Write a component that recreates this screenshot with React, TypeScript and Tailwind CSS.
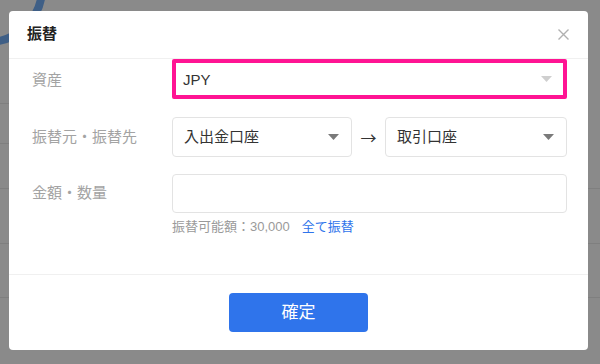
import React from "react";

const font = { fontFamily: '"Liberation Sans", "Noto Sans CJK JP", sans-serif' };

function Caret({ light }: { light?: boolean }) {
  return (
    <svg width="11" height="6" viewBox="0 0 11 6" className="shrink-0">
      <path d="M0 0 L11 0 L5.5 6 Z" fill={light ? "#cfcfcf" : "#7a7a7a"} />
    </svg>
  );
}

export default function App() {
  return (
    <div className="relative w-[600px] h-[364px] overflow-hidden bg-[#8a8a8a]" style={font}>
      {/* background content under overlay */}
      <svg className="absolute left-0 top-0" width="80" height="80" viewBox="0 0 80 80">
        <circle cx="-12" cy="-12" r="54" fill="none" stroke="#3f5f86" strokeWidth="8" />
      </svg>
      <div className="absolute left-0 top-0 w-[600px] h-[364px] flex flex-col">
        <div className="h-[103px] shrink-0" />
        <div className="h-[40px] w-[20px] border-t border-[#7f7f7f]" />
        <div className="h-[45px] w-[20px] border-t border-[#7f7f7f]" />
        <div className="h-[55px] border-t border-[#7f7f7f]" />
        <div className="h-[54px] border-t border-[#7f7f7f]" />
        <div className="h-[20px] border-t border-[#7f7f7f]" />
      </div>

      {/* modal */}
      <div className="absolute left-[9px] top-[11px] w-[579px] h-[339px] bg-white rounded-[4px] flex flex-col">
        <div className="h-[48px] shrink-0 border-b border-[#f0f0f0] flex items-center justify-between pl-[18px] pr-[19px]">
          <span className="text-[15px] font-bold text-[#222]">振替</span>
          <svg width="11" height="11" viewBox="0 0 11 11">
            <path d="M0.5 0.5 L10.5 10.5 M10.5 0.5 L0.5 10.5" stroke="#b0b0b0" strokeWidth="1.4" />
          </svg>
        </div>

        <div className="flex-1 flex flex-col pl-[23px] pr-[21px]">
          {/* row 1 */}
          <div className="flex items-center">
            <div className="w-[140px] shrink-0 text-[15px] text-[#a3a3a3] pt-[2px]">資産</div>
            <div className="flex-1 h-[40px] border-[4px] border-[#ff1493] rounded-[2px] flex items-center justify-between pl-[7px] pr-[11px]">
              <span className="text-[15px] text-[#333] pt-[2px]">JPY</span>
              <Caret light />
            </div>
          </div>

          {/* row 2 */}
          <div className="flex items-center mt-[18px]">
            <div className="w-[140px] shrink-0 text-[15px] text-[#a3a3a3]">振替元・振替先</div>
            <div className="w-[180px] h-[40px] border border-[#e3e3e3] rounded-[4px] flex items-center justify-between pl-[11px] pr-[12px]">
              <span className="text-[15px] text-[#333]">入出金口座</span>
              <Caret />
            </div>
            <div
              className="w-[33px] text-center text-[16px] text-[#333]"
              style={{ fontFamily: '"Noto Sans CJK JP", sans-serif' }}
            >
              →
            </div>
            <div className="flex-1 h-[40px] border border-[#e3e3e3] rounded-[4px] flex items-center justify-between pl-[11px] pr-[12px]">
              <span className="text-[15px] text-[#333]">取引口座</span>
              <Caret />
            </div>
          </div>

          {/* row 3 */}
          <div className="flex mt-[17px]">
            <div className="w-[140px] shrink-0 text-[15px] text-[#a3a3a3] h-[39px] flex items-center">金額・数量</div>
            <div className="flex-1 flex flex-col">
              <div className="h-[39px] border border-[#e3e3e3] rounded-[4px]" />
              <div className="mt-[5px] flex items-center text-[13px] leading-[18px]">
                <span className="text-[#9a9a9a]">振替可能額：30,000</span>
                <span className="ml-[12px] text-[#2f74eb]">全て振替</span>
              </div>
            </div>
          </div>
        </div>

        <div className="h-[76px] shrink-0 border-t border-[#f0f0f0] flex items-start justify-center pt-[18px]">
          <div className="w-[139px] h-[39px] bg-[#2f74eb] rounded-[4px] flex items-center justify-center text-white text-[17px]">
            確定
          </div>
        </div>
      </div>
    </div>
  );
}
